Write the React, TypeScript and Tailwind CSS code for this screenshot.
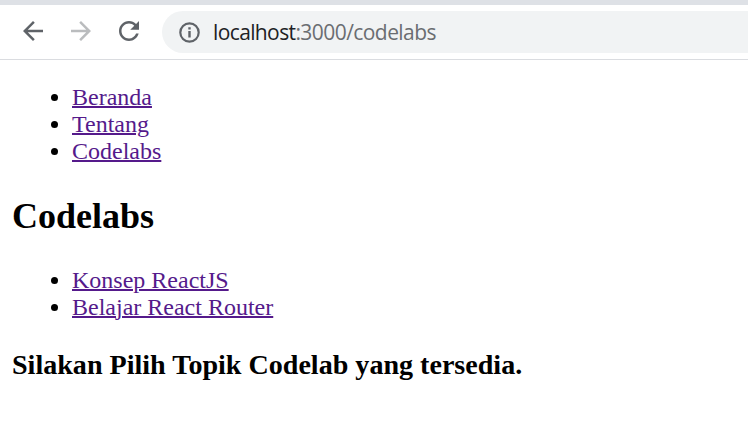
import React from "react";

const ARROW_BACK = "M20 11H7.83l5.59-5.59L12 4l-8 8 8 8 1.41-1.41L7.83 13H20v-2z";
const ARROW_FORWARD = "M12 4l-1.41 1.41L16.17 11H4v2h12.17l-5.58 5.59L12 20l8-8z";
const RELOAD =
  "M17.65 6.35C16.2 4.9 14.21 4 12 4c-4.42 0-7.99 3.58-7.99 8s3.57 8 7.99 8c3.73 0 6.84-2.55 7.73-6h-2.08c-.82 2.33-3.04 4-5.65 4-3.31 0-6-2.69-6-6s2.69-6 6-6c1.66 0 3.14.69 4.22 1.78L13 11h7V4l-2.35 2.35z";

function ToolbarIcon({ d, className }: { d: string; className: string }) {
  return (
    <svg viewBox="0 0 24 24" className={`h-[30px] w-[30px] shrink-0 ${className}`} fill="currentColor">
      <path d={d} />
    </svg>
  );
}

function LinkList({ items }: { items: string[] }) {
  return (
    <ul className="list-disc pl-[60px]">
      {items.map((item) => (
        <li key={item} className="h-[27px]">
          <a href="#" className="text-[#551a8b] underline decoration-2">
            {item}
          </a>
        </li>
      ))}
    </ul>
  );
}

export default function App() {
  return (
    <div className="h-[447px] w-full overflow-hidden bg-white">
      <header className="h-[60px] border-t-[5px] border-b border-t-[#dee1e6] border-b-[#dadce0] bg-white">
        <div className="flex pl-[18px]">
          <div className="flex gap-[18px] pt-[11px] text-[#5f6368]">
            <ToolbarIcon d={ARROW_BACK} className="" />
            <ToolbarIcon d={ARROW_FORWARD} className="text-[#babcbe]" />
            <ToolbarIcon d={RELOAD} className="" />
          </div>
          <div className="mt-[6px] ml-[18px] flex h-[42px] flex-1 items-center rounded-l-full bg-[#f1f3f4] pl-[17px]">
            <svg viewBox="0 0 21 21" className="h-[21px] w-[21px] shrink-0" fill="none">
              <circle cx="10.5" cy="10.5" r="9.2" stroke="#5f6368" strokeWidth="2.2" />
              <path d="M9.3 5.3h2.4v2.2H9.3zM9.3 9h2.4v6.5H9.3z" fill="#5f6368" />
            </svg>
            <div className="ml-[13px] font-['Open_Sans',sans-serif] text-[21px] leading-[28px] tracking-[-0.56px] whitespace-nowrap text-[#6a6d71]">
              <span className="tracking-[-0.62px] text-[#202124]">localhost</span>:3000/codelabs
            </div>
          </div>
        </div>
      </header>
      <main className="px-3 pt-6 font-['Liberation_Serif',serif] text-[24px] leading-[27px] text-black">
        <LinkList items={["Beranda", "Tentang", "Codelabs"]} />
        <h2 className="my-[30px] text-[36px] leading-[42px] font-bold">Codelabs</h2>
        <LinkList items={["Konsep ReactJS", "Belajar React Router"]} />
        <h3 className="mt-7 text-[28.08px] leading-[32px] font-bold">Silakan Pilih Topik Codelab yang tersedia.</h3>
      </main>
    </div>
  );
}
